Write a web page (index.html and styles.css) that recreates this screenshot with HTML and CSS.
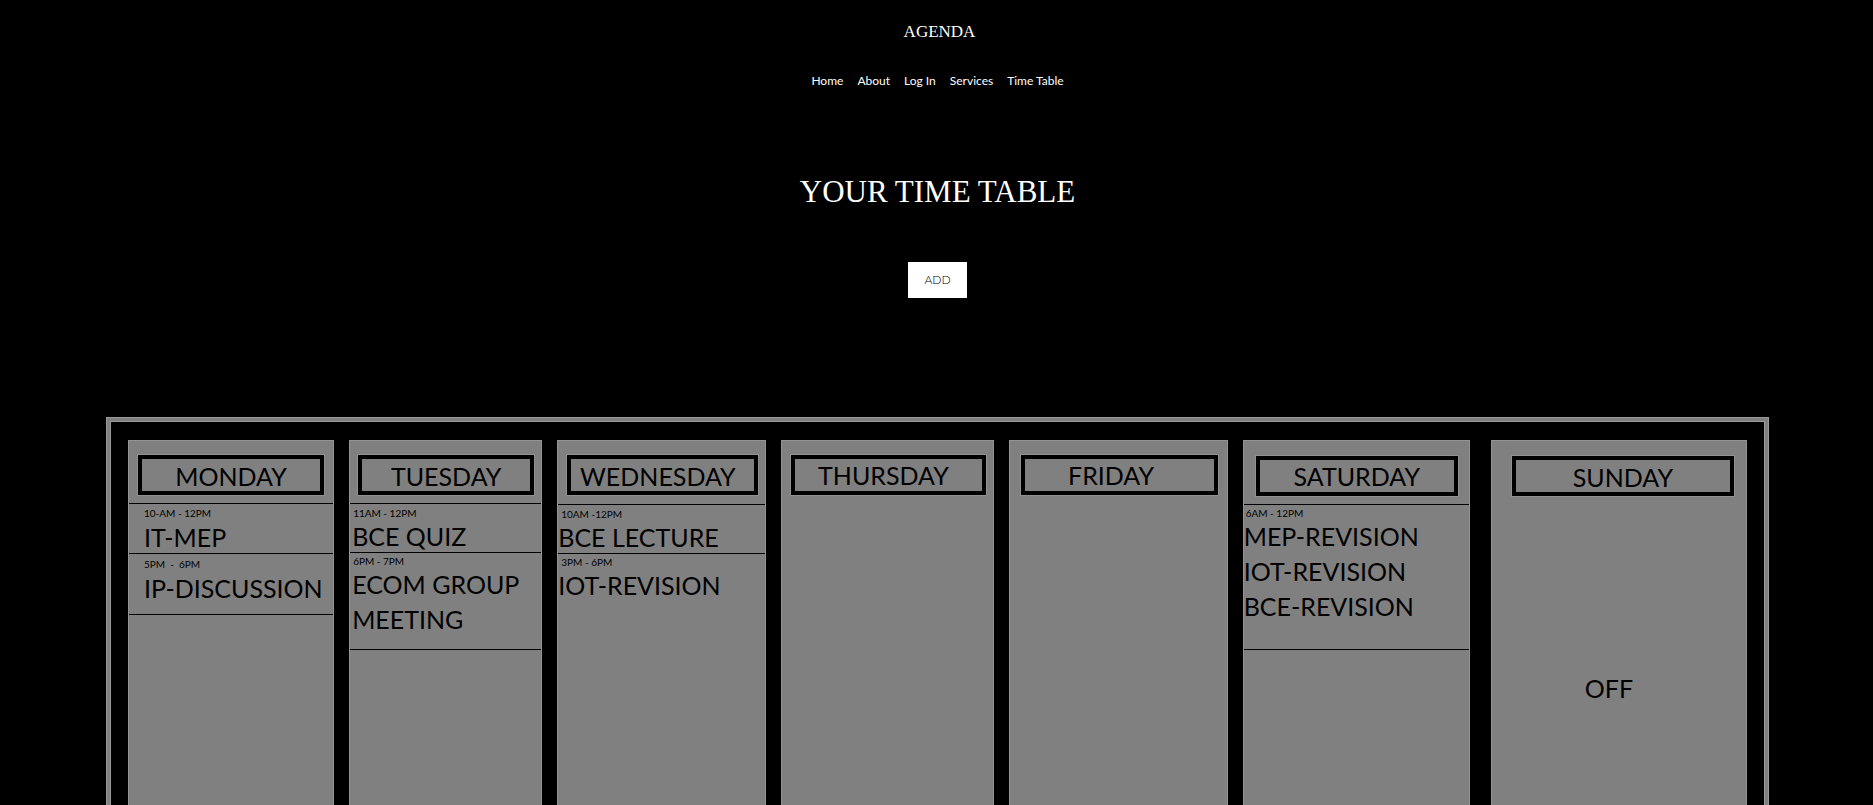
FILE: index.html
```html
<!DOCTYPE html>
<html lang="en">
<head>
<meta charset="utf-8">
<meta name="viewport" content="width=device-width, initial-scale=1">
<title>Agenda - Time Table</title>
<link rel="stylesheet" href="styles.css">
</head>
<body>
<header class="site-header">
  <a class="logo" href="#">AGENDA</a>
  <nav class="nav" aria-label="Main">
    <a href="#">Home</a>
    <a href="#">About</a>
    <a href="#">Log In</a>
    <a href="#">Services</a>
    <a href="#">Time Table</a>
  </nav>
</header>
<main>
  <section class="intro">
    <h1 class="title">YOUR TIME TABLE</h1>
    <button class="add" type="button">ADD</button>
  </section>
  <section class="board" aria-label="Week">
    <article class="day day-mon">
      <h2 class="day-name">MONDAY</h2>
      <div class="entry">
        <p class="time">10-AM - 12PM</p>
        <p class="task">IT-MEP</p>
      </div>
      <div class="entry">
        <p class="time">5PM&nbsp; -&nbsp; 6PM</p>
        <p class="task">IP-DISCUSSION</p>
      </div>
    </article>
    <article class="day day-tue">
      <h2 class="day-name">TUESDAY</h2>
      <div class="entry">
        <p class="time">11AM - 12PM</p>
        <p class="task">BCE QUIZ</p>
      </div>
      <div class="entry">
        <p class="time">6PM - 7PM</p>
        <p class="task"><span>ECOM GROUP</span> <span>MEETING</span></p>
      </div>
    </article>
    <article class="day day-wed">
      <h2 class="day-name">WEDNESDAY</h2>
      <div class="entry">
        <p class="time">10AM -12PM</p>
        <p class="task">BCE LECTURE</p>
      </div>
      <div class="entry">
        <p class="time">3PM - 6PM</p>
        <p class="task">IOT-REVISION</p>
      </div>
    </article>
    <article class="day day-thu">
      <h2 class="day-name">THURSDAY</h2>
    </article>
    <article class="day day-fri">
      <h2 class="day-name">FRIDAY</h2>
    </article>
    <article class="day day-sat">
      <h2 class="day-name">SATURDAY</h2>
      <div class="entry">
        <p class="time">6AM - 12PM</p>
        <p class="task"><span>MEP-REVISION</span> <span>IOT-REVISION</span> <span>BCE-REVISION</span></p>
      </div>
    </article>
    <article class="day day-sun">
      <h2 class="day-name">SUNDAY</h2>
      <p class="off">OFF</p>
    </article>
  </section>
</main>
</body>
</html>
```
FILE: styles.css
```css
* { box-sizing: border-box; }

body {
  margin: 0;
  background: #000;
  color: #fff;
  font-family: Lato, "Liberation Sans", sans-serif;
}

h1, h2, p { margin: 0; font-weight: 400; }

a { color: inherit; text-decoration: none; }

.site-header {
  display: flex;
  flex-direction: column;
  align-items: center;
  gap: 29px;
  padding: 20px 0 1px 2px;
}

.logo {
  padding-left: 4px;
  font-family: "Liberation Serif", serif;
  font-size: 17px;
  line-height: 24px;
}

.nav {
  display: flex;
  gap: 14px;
  font-size: 12px;
  line-height: 16px;
}

.intro {
  display: flex;
  flex-direction: column;
  align-items: center;
  gap: 49px;
  padding: 81px 0 119px 2px;
}

.title {
  font-family: "Liberation Serif", serif;
  font-size: 31px;
  line-height: 42px;
}

.add {
  padding: 0 16px;
  border: 0;
  background: #fff;
  color: #000;
  font-family: Lato, "Liberation Sans", sans-serif;
  font-size: 12px;
  font-weight: 300;
  line-height: 36px;
}

/* Week board */
.board {
  display: grid;
  grid-template-columns: 206fr 193fr 209fr 212fr 219fr 227fr 262fr;
  gap: 15px;
  min-height: 900px;
  margin: 0 104px 40px 106px;
  padding: 22px 21px;
  border: 1px solid #999;
  box-shadow: inset 0 0 0 3px #808080, inset 0 0 0 4px #999;
}

.day {
  border: 1px solid #949494;
  border-bottom-color: #808080;
  background: #808080;
  color: #000;
}

.day-name {
  margin: 14px 9px 8px;
  border: 4px solid #000;
  outline: 1px solid #909090;
  font-size: 25px;
  line-height: 32px;
  text-align: center;
}

.entry {
  display: grid;
  padding: 1px 0;
  border-top: 1px solid #000;
}

.time {
  padding-left: 3px;
  font-size: 10px;
  line-height: 16px;
}

.task {
  display: grid;
  gap: 5px;
  font-size: 25px;
  line-height: 30px;
}

.day-mon .day-name,
.day-tue .day-name,
.day-wed .day-name,
.day-sun .day-name {
  padding-top: 2px;
  line-height: 30px;
}

.day-mon .time, .day-mon .task { padding-left: 15px; }
.day-mon .entry { gap: 1px; }
.day-mon .entry:last-child { padding: 2px 0 11px; border-bottom: 1px solid #000; }

.day-tue .day-name { margin-right: 7px; margin-left: 8px; }
.day-tue .time { padding-left: 3px; }
.day-tue .task { padding-left: 2px; }
.day-tue .entry:last-child { padding: 0 0 15px; border-bottom: 1px solid #000; }

.day-wed .day-name, .day-thu .day-name { margin-right: 7px; padding-right: 10px; }
.day-wed .day-name { margin-bottom: 9px; }
.day-wed .entry:last-child { padding-top: 0; }

.day-fri .day-name { margin-left: 11px; padding-right: 16px; }

.day-sat .day-name { margin: 15px 11px 8px 12px; }
.day-sat .time { padding-left: 2px; }
.day-sat .entry { padding: 0 0 28px; border-bottom: 1px solid #000; }

.day-sun { margin-left: 6px; }
.day-sun .day-name { margin: 15px 12px 8px 20px; }

.off {
  padding: 169px 20px 0 0;
  font-size: 25px;
  line-height: 30px;
  text-align: center;
}
```
